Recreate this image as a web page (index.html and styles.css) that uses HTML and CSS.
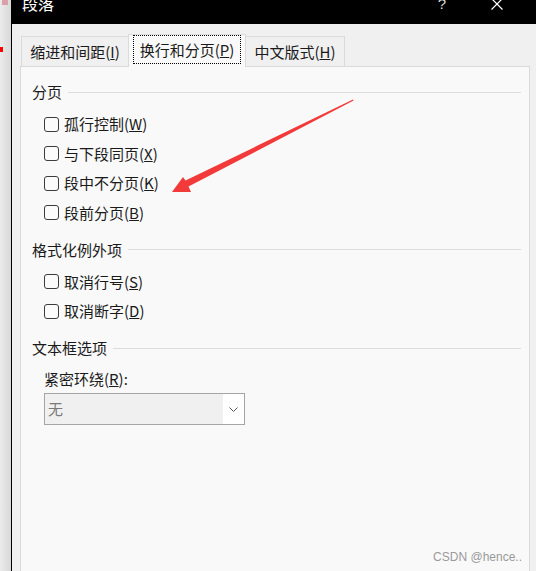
FILE: index.html
```html
<!DOCTYPE html>
<html lang="zh-CN">
<head>
    <meta charset="UTF-8">
    <meta name="viewport" content="width=device-width, initial-scale=1.0">
    <title>段落</title>
    <link rel="stylesheet" href="styles.css">
</head>
<body>
    <div class="screen">
        <div class="side">
            <span class="side-icon"></span>
            <span class="side-mark"></span>
        </div>

        <div class="dialog">
            <div class="titlebar">
                <span class="title">段落</span>
                <span class="help">?</span>
                <svg class="close" width="12" height="12" viewBox="0 0 12 12">
                    <path d="M0.5 0.5 L11.5 11.5 M11.5 0.5 L0.5 11.5" stroke="#fff" stroke-width="1.2" fill="none"/>
                </svg>
            </div>

            <div class="body">
                <div class="tabs">
                    <div class="tab tab-indent"><span>缩进和间距(<u>I</u>)</span></div>
                    <div class="tab tab-active"><span class="focus">换行和分页(<u>P</u>)</span></div>
                    <div class="tab tab-cn"><span>中文版式(<u>H</u>)</span></div>
                </div>

                <div class="panel">
                    <div class="group-title first"><span>分页</span></div>
                    <div class="options">
                        <label class="option"><span class="box"></span><span>孤行控制(<u>W</u>)</span></label>
                        <label class="option"><span class="box"></span><span>与下段同页(<u>X</u>)</span></label>
                        <label class="option"><span class="box"></span><span>段中不分页(<u>K</u>)</span></label>
                        <label class="option"><span class="box"></span><span>段前分页(<u>B</u>)</span></label>
                    </div>

                    <div class="group-title"><span>格式化例外项</span></div>
                    <div class="options">
                        <label class="option"><span class="box"></span><span>取消行号(<u>S</u>)</span></label>
                        <label class="option"><span class="box"></span><span>取消断字(<u>D</u>)</span></label>
                    </div>

                    <div class="group-title"><span>文本框选项</span></div>
                    <div class="field-label">紧密环绕(<u>R</u>):</div>
                    <div class="select">
                        <span class="select-value">无</span>
                        <span class="select-button">
                            <svg width="9" height="5" viewBox="0 0 9 5">
                                <path d="M0.5 0.5 L4.5 4.5 L8.5 0.5" stroke="#555" stroke-width="1" fill="none"/>
                            </svg>
                        </span>
                    </div>
                </div>
            </div>
        </div>

        <!-- red annotation arrow drawn over the dialog -->
        <svg class="arrow" width="536" height="571" viewBox="0 0 536 571">
            <polygon points="353,99.5 353.6,100.6 188.5,186.5 191,192 172,192 183,177 185.5,180.5" fill="#f23a3a"/>
        </svg>

        <div class="watermark">CSDN @hence..</div>
    </div>
</body>
</html>
```

FILE: styles.css
```css
* {
    box-sizing: border-box;
}

body {
    margin: 0;
    font-family: "Noto Sans CJK SC", "Noto Sans", sans-serif;
    color: #1a1a1a;
    overflow: hidden;
}

.screen {
    position: relative;
    display: flex;
    width: 536px;
    height: 571px;
    background-color: #f0f0f0;
}

.side {
    position: relative;
    width: 12px;
    height: 571px;
    background: linear-gradient(to right, #ebebeb, #d8d8d8);
    border-right: 1px solid #000;
}

.side-icon {
    position: absolute;
    top: 0;
    left: 2px;
    width: 6px;
    height: 5px;
    background-color: #d9a0a8;
}

.side-mark {
    position: absolute;
    top: 47px;
    left: 0;
    width: 3px;
    height: 5px;
    background-color: #f00;
}

.dialog {
    flex: 1;
    display: flex;
    flex-direction: column;
}

.titlebar {
    display: flex;
    align-items: flex-start;
    height: 24px;
    background-color: #000;
    color: #fff;
    overflow: hidden;
}

.title {
    margin: -5px 0 0 10px;
    font-size: 16px;
    line-height: 16px;
}

.help {
    margin: -4px 0 0 auto;
    font-family: "Liberation Sans", sans-serif;
    font-size: 15px;
    line-height: 15px;
    color: #ddd;
}

.close {
    margin: -2px 33px 0 45px;
}

.body {
    flex: 1;
    display: flex;
    flex-direction: column;
    padding: 10px 6px 0 8px;
}

.tabs {
    display: flex;
    align-items: flex-end;
    padding-left: 1px;
    font-size: 15px;
    line-height: 20px;
}

.tab {
    display: flex;
    align-items: center;
    justify-content: center;
    height: 30px;
    padding-top: 1px;
    border: 1px solid #dadada;
    border-bottom: none;
    background-color: #f0f0f0;
}

.tab-indent {
    width: 107px;
    border-right: none;
}

.tab-cn {
    width: 99px;
    border-left: none;
}

.tab-active {
    position: relative;
    z-index: 1;
    width: 118px;
    height: 33px;
    margin-bottom: -1px;
    padding: 0 4px 2px;
    align-items: flex-start;
    background-color: #f9f9f9;
}

.focus {
    display: block;
    width: 100%;
    height: 29px;
    border: 1px dotted #000;
    line-height: 27px;
    text-align: center;
}

.panel {
    flex: 1;
    padding: 0 8px 0 11px;
    border: 1px solid #dadada;
    border-bottom: none;
    background-color: #f9f9f9;
    font-size: 15px;
}

.group-title {
    display: flex;
    align-items: center;
    margin-top: 12px;
    height: 20px;
    line-height: 20px;
}

.group-title.first {
    margin-top: 15px;
}

.group-title::after {
    content: "";
    flex: 1;
    height: 1px;
    margin-left: 6px;
    background-color: #dcdcdc;
}

.options {
    display: flex;
    flex-direction: column;
    margin-top: 7.5px;
    padding-left: 12px;
}

.option {
    display: flex;
    align-items: center;
    gap: 5px;
    height: 29.5px;
    line-height: 20px;
}

.box {
    width: 15px;
    height: 15px;
    border: 1.5px solid #3c3c3c;
    border-radius: 3px;
    background-color: #fbfbfb;
}

.field-label {
    margin: 11px 0 0 12px;
    line-height: 20px;
}

.select {
    display: flex;
    width: 201px;
    height: 32px;
    margin: 4px 0 0 12px;
    border: 1px solid #a5a5a5;
    background-color: #f0f0f0;
}

.select-value {
    flex: 1;
    padding-left: 3px;
    line-height: 30px;
    color: #7a7a7a;
}

.select-button {
    display: flex;
    align-items: center;
    justify-content: center;
    width: 21px;
    background-color: #fff;
}

.arrow {
    position: absolute;
    top: 0;
    left: 0;
    pointer-events: none;
}

.watermark {
    position: absolute;
    right: 14px;
    top: 549px;
    font-family: "Liberation Sans", sans-serif;
    font-size: 12px;
    line-height: 16px;
    color: #9a9a9a;
}
```
